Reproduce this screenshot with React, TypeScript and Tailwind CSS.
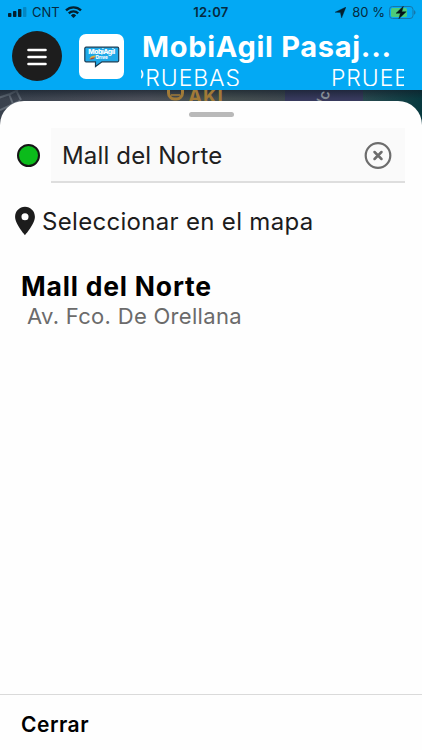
import { MdLocationOn } from "react-icons/md";

function StatusBar() {
  return (
    <div className="flex h-6 items-center pl-2 pr-[6px] text-[#062a40]">
      <div className="flex w-1/3 items-center">
        <svg width="19" height="10" viewBox="0 0 19 10" fill="#04202f">
          <rect x="0" y="6" width="3.4" height="4" rx="0.8" />
          <rect x="5" y="4" width="3.4" height="6" rx="0.8" />
          <rect x="10" y="2" width="3.4" height="8" rx="0.8" />
          <rect x="15" y="0" width="3.4" height="10" rx="0.8" fillOpacity="0.25" />
        </svg>
        <span className="ml-[5px] text-[13px] leading-none">CNT</span>
        <svg className="ml-[5px]" width="17" height="12" viewBox="0 0 17 12" fill="none" stroke="#04202f" strokeWidth="2.3">
          <path d="M1 4.4a10.6 10.6 0 0 1 15 0" />
          <path d="M3.8 7.4a6.7 6.7 0 0 1 9.4 0" />
          <path d="M8.5 12 5.9 9.4a3.7 3.7 0 0 1 5.2 0z" fill="#04202f" stroke="none" />
        </svg>
      </div>
      <div className="flex w-1/3 justify-center pr-[2px] text-[13px] font-semibold leading-none tracking-[0.4px]">12:07</div>
      <div className="flex w-1/3 items-center justify-end">
        <svg width="11" height="11" viewBox="0 0 10 10" fill="#04202f">
          <path d="M10 0 6 10 4.9 5.1 0 4.8z" stroke="#04202f" strokeWidth="0.3" />
        </svg>
        <span className="ml-[6px] whitespace-nowrap text-[13px] leading-none">80 %</span>
        <svg className="ml-[4px]" width="27" height="13" viewBox="0 0 27 13">
          <rect x="0.5" y="0.5" width="23.5" height="12" rx="3" fill="none" stroke="#1676a9" />
          <rect x="2" y="2" width="16" height="9" rx="1.5" fill="#4ccb7a" />
          <path d="M25 4.3c2 .7 2 3.7 0 4.4z" fill="#1676a9" />
          <path d="M14.4 0.2 7 7.3h4.4L9.8 12.8l7.4-7.1h-4.4z" fill="#04141d" stroke="#04141d" strokeWidth="0.4" />
        </svg>
      </div>
    </div>
  );
}

function Logo() {
  return (
    <div className="flex size-[45px] shrink-0 items-center justify-center rounded-[7px] bg-white">
      <svg width="36" height="22" viewBox="0 0 36 22">
        <path
          d="M2 1.2h31.5a1.2 1.2 0 0 1 1.2 1.2v12.2a1.2 1.2 0 0 1-1.2 1.2H18l-6.5 4.7v-4.7H2A1.2 1.2 0 0 1 .8 14.6V2.4A1.2 1.2 0 0 1 2 1.2z"
          fill="#1fa9e8"
          stroke="#173c55"
          strokeWidth="1.2"
        />
        <path d="M5.5 13c1-3 3-3.6 6.5-3.5-.5 2.5-3 3.500-6.500 3.500z" fill="#d9b445" />
        <path d="M5.5 13.3c1.500-1.500 3-1.700 5.500-1.800-1 1.700-3 2.200-5.500 1.800z" fill="#a8453c" />
        <text x="17.7" y="8" textAnchor="middle" textLength="27" fontSize="6.8" fontWeight="800" fill="#fff">MobiAgil</text>
        <text x="17.7" y="12.6" textAnchor="middle" textLength="12" fontSize="4.6" fontWeight="800" fill="#fff">Drive</text>
      </svg>
    </div>
  );
}

function Header() {
  return (
    <header className="h-[90px] bg-[#03a9f4]">
      <StatusBar />
      <div className="flex items-start pl-3 text-white">
        <button type="button" aria-label="Menú" className="mt-[7px] flex size-[50px] shrink-0 items-center justify-center rounded-full bg-[#1d1d1d]">
          <svg className="mt-[2px]" width="20" height="18" viewBox="0 0 20 18" stroke="#fff" strokeWidth="2.6" strokeLinecap="round">
            <path d="M1.5 2h17M1.5 9h17M1.5 16h17" />
          </svg>
        </button>
        <div className="ml-[17px] mt-[10px]">
          <Logo />
        </div>
        <div className="ml-[17px] w-[263px]">
          <h1 className="mt-[5px] whitespace-nowrap pl-[1px] text-[29px] font-bold leading-[36px] tracking-[0.7px]">MobiAgil Pasaj...</h1>
          <div className="mt-[1px] flex h-[20px] justify-between overflow-hidden whitespace-nowrap text-[23px] font-light leading-[25px] tracking-[0.9px]">
            <span className="-ml-[11px]">PRUEBAS</span>
            <span className="w-[73px] overflow-hidden">PRUEBAS</span>
          </div>
        </div>
      </div>
    </header>
  );
}

// Sliver of the dimmed map left visible above the sheet
function MapStrip() {
  return (
    <svg className="absolute inset-x-0 top-[90px]" width="422" height="36" viewBox="0 0 422 36">
      <defs>
        <linearGradient id="map" x1="0" x2="1" y1="0" y2="0">
          <stop offset="0" stopColor="#3a424e" />
          <stop offset="0.35" stopColor="#4b4f59" />
          <stop offset="0.5" stopColor="#45504f" />
          <stop offset="0.65" stopColor="#40494f" />
          <stop offset="0.85" stopColor="#2b4a50" />
          <stop offset="1" stopColor="#07393f" />
        </linearGradient>
        <linearGradient id="shade" x1="0" x2="0" y1="0" y2="1">
          <stop offset="0" stopColor="#111c28" stopOpacity="0.6" />
          <stop offset="0.25" stopColor="#111c28" stopOpacity="0" />
        </linearGradient>
      </defs>
      <rect width="422" height="36" fill="url(#map)" />
      <path d="M-2 8 10 4 18 0M0 20 20 11M9 4l4 10M16 0l5 10" stroke="#626b76" strokeWidth="2" fill="none" />
      <rect x="285" width="78" height="12" fill="#37395c" />
      <rect width="422" height="36" fill="url(#shade)" />
      <rect x="168.5" y="-6" width="14" height="15" rx="6" fill="none" stroke="#a07a38" strokeWidth="3" />
      <path d="M171 5h9" stroke="#a07a38" strokeWidth="1.5" />
      <text x="188" y="13" fontSize="19" fontWeight="700" letterSpacing="0.8" fill="#a07a38">AKI</text>
      <text fontSize="15" fontWeight="600" fill="#858d96" transform="translate(327 16) rotate(-78)">/c</text>
    </svg>
  );
}

function SearchField() {
  return (
    <div className="flex items-center px-[17px]">
      <span className="size-[23px] shrink-0 rounded-full border-2 border-[#151515] bg-[#0bbb1b]" />
      <div className="ml-[11px] flex h-[55px] flex-1 items-center justify-between border-b-2 border-[#dedede] bg-[#fafafa] pl-[11px] pr-[13px] pt-[2px]">
        <span className="whitespace-nowrap text-[24px] leading-none tracking-[0.15px] text-[#202020]">Mall del Norte</span>
        <svg width="28" height="28" viewBox="0 0 28 28" fill="none" stroke="#6d6d6d" strokeLinecap="round">
          <circle cx="14" cy="13.5" r="12.3" strokeWidth="2.2" />
          <path d="m10.5 10 7 7m0-7-7 7" strokeWidth="2.5" />
        </svg>
      </div>
    </div>
  );
}

export default function App() {
  return (
    <div className="relative flex h-[750px] w-[422px] flex-col overflow-hidden bg-[#03a9f4] font-['Inter',sans-serif]">
      <Header />
      <MapStrip />
      <main className="relative mt-[11px] flex flex-1 flex-col rounded-t-[24px] bg-[#fefefe]">
        <div className="mx-auto mt-[11px] h-[5px] w-[45px] rounded-full bg-[#b9b9b9]" />
        <div className="mt-[11px]">
          <SearchField />
        </div>
        <div className="mt-[20px] flex h-[36px] items-center pl-[8px] text-[#1c1c1c]">
          <MdLocationOn className="size-[34px] shrink-0" />
          <span className="mt-[1px] whitespace-nowrap text-[24px] leading-none tracking-[0.31px]">Seleccionar en el mapa</span>
        </div>
        <div className="mt-[31px] pl-[21px]">
          <p className="whitespace-nowrap text-[26.5px] font-bold leading-[32px] tracking-[0.8px] text-black">Mall del Norte</p>
          <p className="whitespace-nowrap pl-[6px] text-[22px] leading-[28px] tracking-[0.3px] text-[#6b6b6b]">Av. Fco. De Orellana</p>
        </div>
        <div className="mt-auto flex h-[56px] items-center border-t border-[#dadada] pl-[21px]">
          <button type="button" className="mt-[3px] text-[21px] font-semibold leading-none tracking-[0.5px] text-black">Cerrar</button>
        </div>
      </main>
    </div>
  );
}
